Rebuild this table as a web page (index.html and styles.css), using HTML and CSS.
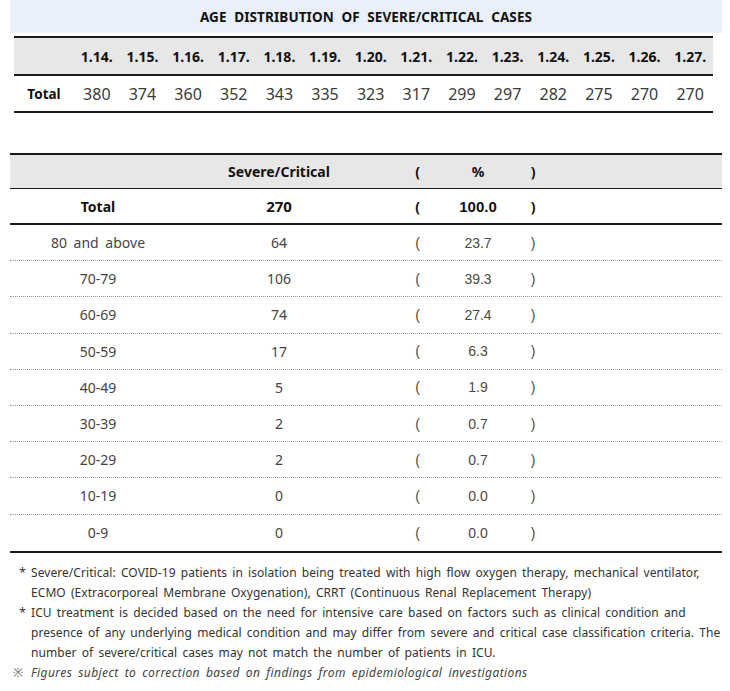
FILE: index.html
```html
<!DOCTYPE html>
<html lang="en">
<head>
<meta charset="utf-8">
<title>Age distribution of severe/critical cases</title>
<link rel="stylesheet" href="styles.css">
</head>
<body>
<div class="page">
  <div class="title-band">AGE DISTRIBUTION OF SEVERE/CRITICAL CASES</div>

  <div class="trend">
    <div class="trend-row trend-head">
      <span></span>
      <span>1.14.</span><span>1.15.</span><span>1.16.</span><span>1.17.</span><span>1.18.</span><span>1.19.</span><span>1.20.</span>
      <span>1.21.</span><span>1.22.</span><span>1.23.</span><span>1.24.</span><span>1.25.</span><span>1.26.</span><span>1.27.</span>
    </div>
    <div class="trend-row trend-body">
      <span class="trend-label">Total</span>
      <span>380</span><span>374</span><span>360</span><span>352</span><span>343</span><span>335</span><span>323</span>
      <span>317</span><span>299</span><span>297</span><span>282</span><span>275</span><span>270</span><span>270</span>
    </div>
  </div>

  <div class="ages">
    <div class="age-row age-head">
      <span></span><span>Severe/Critical</span><span class="paren-l">(</span><span>%</span><span>)</span><span></span>
    </div>
    <div class="age-row age-total">
      <span>Total</span><span class="count">270</span><span class="paren-l">(</span><span class="pct">100.0</span><span>)</span><span></span>
    </div>
    <div class="age-row age-data">
      <span class="label">80 and above</span><span class="count">64</span><span class="paren-l">(</span><span class="pct">23.7</span><span class="paren-r">)</span><span></span>
    </div>
    <div class="age-row age-data">
      <span class="label">70-79</span><span class="count">106</span><span class="paren-l">(</span><span class="pct">39.3</span><span class="paren-r">)</span><span></span>
    </div>
    <div class="age-row age-data">
      <span class="label">60-69</span><span class="count">74</span><span class="paren-l">(</span><span class="pct">27.4</span><span class="paren-r">)</span><span></span>
    </div>
    <div class="age-row age-data">
      <span class="label">50-59</span><span class="count">17</span><span class="paren-l">(</span><span class="pct">6.3</span><span class="paren-r">)</span><span></span>
    </div>
    <div class="age-row age-data">
      <span class="label">40-49</span><span class="count">5</span><span class="paren-l">(</span><span class="pct">1.9</span><span class="paren-r">)</span><span></span>
    </div>
    <div class="age-row age-data">
      <span class="label">30-39</span><span class="count">2</span><span class="paren-l">(</span><span class="pct">0.7</span><span class="paren-r">)</span><span></span>
    </div>
    <div class="age-row age-data">
      <span class="label">20-29</span><span class="count">2</span><span class="paren-l">(</span><span class="pct">0.7</span><span class="paren-r">)</span><span></span>
    </div>
    <div class="age-row age-data">
      <span class="label">10-19</span><span class="count">0</span><span class="paren-l">(</span><span class="pct">0.0</span><span class="paren-r">)</span><span></span>
    </div>
    <div class="age-row age-data age-last">
      <span class="label">0-9</span><span class="count">0</span><span class="paren-l">(</span><span class="pct">0.0</span><span class="paren-r">)</span><span></span>
    </div>
  </div>

  <div class="notes">
    <p class="note"><span class="mark">*</span><span>Severe/Critical: COVID-19 patients in isolation being treated with high flow oxygen therapy, mechanical ventilator,<br>ECMO (Extracorporeal Membrane Oxygenation), CRRT (Continuous Renal Replacement Therapy)</span></p>
    <p class="note"><span class="mark">*</span><span>ICU treatment is decided based on the need for intensive care based on factors such as clinical condition and<br>presence of any underlying medical condition and may differ from severe and critical case classification criteria. The<br>number of severe/critical cases may not match the number of patients in ICU.</span></p>
    <p class="note note-italic"><span class="mark mark-ref">※</span><span>Figures subject to correction based on findings from epidemiological investigations</span></p>
  </div>
</div>
</body>
</html>
```
FILE: styles.css
```css
* { box-sizing: border-box; }

html, body {
  margin: 0;
  padding: 0;
  background: #ffffff;
}

body {
  font-family: "Noto Sans", "Open Sans", "Liberation Sans", sans-serif;
  color: #333333;
  width: 730px;
}

.page {
  display: flex;
  flex-direction: column;
}

.title-band {
  margin: 0 8px 0 10px;
  height: 33px;
  background: #eaf0f9;
  display: flex;
  align-items: center;
  justify-content: center;
  font-size: 13.5px;
  font-weight: 700;
  color: #111111;
  word-spacing: 4px;
  letter-spacing: 0.1px;
}

/* ---------- daily trend table ---------- */
.trend {
  margin: 3px 17px 0 14px;
  border-top: 2px solid #1a1a1a;
  border-bottom: 2px solid #1a1a1a;
}

.trend-row {
  display: grid;
  grid-template-columns: 60px repeat(14, 1fr);
  align-items: center;
  text-align: center;
}

.trend-head {
  height: 38px;
  background: #e7e7e7;
  border-bottom: 2px solid #1a1a1a;
  font-size: 14px;
  font-weight: 700;
  color: #111111;
}

.trend-body {
  height: 35px;
  font-size: 16px;
  color: #3a3a3a;
}

.trend-label {
  font-size: 13.5px;
  font-weight: 700;
  color: #111111;
}

/* ---------- age table ---------- */
.ages {
  margin: 40px 8px 0 10px;
  border-top: 2px solid #1a1a1a;
  border-bottom: 2px solid #1a1a1a;
}

.age-row {
  display: grid;
  grid-template-columns: 176px 186px 60px 92px 18px 1fr;
  align-items: center;
  text-align: center;
}

.paren-l {
  text-align: right;
  padding-right: 12px;
}

.age-head {
  height: 34px;
  background: #e7e7e7;
  border-bottom: 1px solid #1a1a1a;
  font-size: 14px;
  font-weight: 700;
  color: #111111;
}

.age-total {
  height: 36px;
  border-bottom: 2px solid #1a1a1a;
  font-size: 14px;
  font-weight: 700;
  color: #111111;
}

.age-total .count { font-size: 15px; }

.age-total .pct {
  font-family: "Liberation Sans", Arial, sans-serif;
  font-size: 15px;
}

.age-data {
  height: 36.2px;
  border-bottom: 1px dotted #9a9a9a;
  font-size: 14px;
  color: #444444;
}

.age-last { border-bottom: none; }

.label { word-spacing: 3px; }

.age-data .pct,
.age-data .paren-l,
.age-data .paren-r {
  font-family: "Liberation Sans", Arial, sans-serif;
  font-size: 14px;
  color: #4a4a4a;
}

/* ---------- notes ---------- */
.notes {
  margin: 10px 0 0 0;
  display: flex;
  flex-direction: column;
}

.note {
  margin: 0;
  display: flex;
  font-size: 12px;
  line-height: 20px;
  color: #333333;
  word-spacing: 2px;
  letter-spacing: 0.06px;
}

.mark {
  width: 31px;
  flex: none;
  text-align: right;
  padding-right: 5px;
}

.mark-ref {
  padding-right: 8px;
  font-style: normal;
  font-size: 12px;
  color: #666666;
  letter-spacing: 0;
}

.note-italic {
  font-style: italic;
  color: #444444;
  letter-spacing: 0.4px;
  word-spacing: 2.5px;
}
```
